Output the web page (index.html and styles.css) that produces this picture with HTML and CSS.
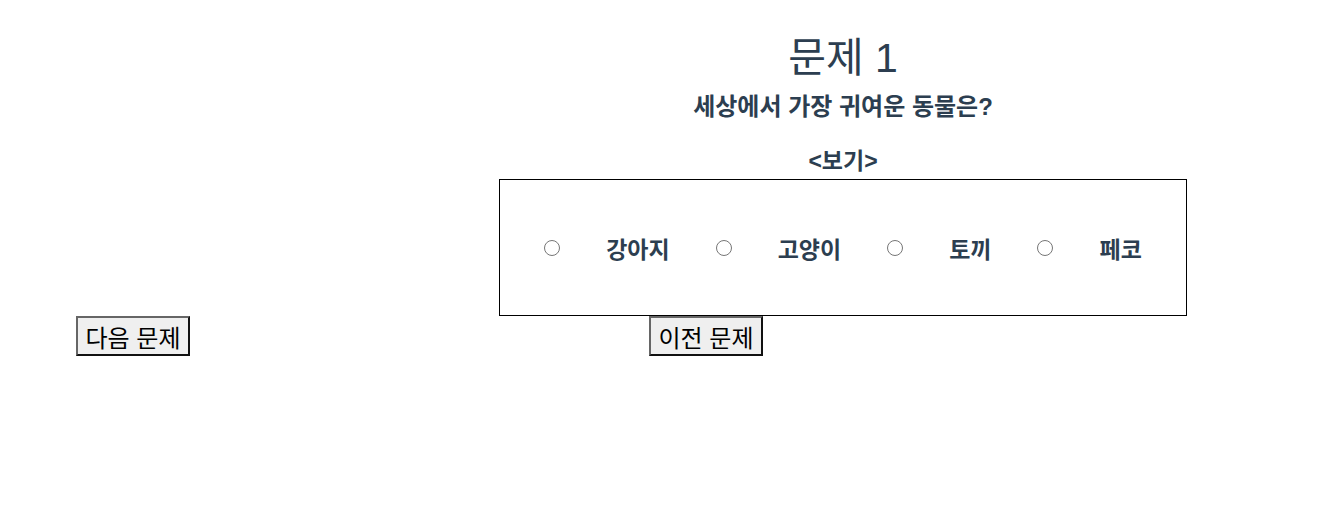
FILE: index.html
```html
<!DOCTYPE html>
<html lang="ko">
<head>
  <meta charset="UTF-8">
  <meta name="viewport" content="width=device-width, initial-scale=1.0">
  <title>퀴즈</title>
  <link rel="stylesheet" href="styles.css">
</head>
<body>
  <div id="app">
    <div class="quiz">
      <h1 class="quiz-title">문제 1</h1>
      <h3 class="quiz-question">세상에서 가장 귀여운 동물은?</h3>
      <h4 class="quiz-label">&lt;보기&gt;</h4>
      <div class="choices">
        <input type="radio" name="answer" id="a1" value="1">
        <label for="a1">강아지</label>
        <input type="radio" name="answer" id="a2" value="2">
        <label for="a2">고양이</label>
        <input type="radio" name="answer" id="a3" value="3">
        <label for="a3">토끼</label>
        <input type="radio" name="answer" id="a4" value="4">
        <label for="a4">페코</label>
      </div>
    </div>
    <div class="nav">
      <button class="nav-btn">다음 문제</button>
      <button class="nav-btn">이전 문제</button>
    </div>
  </div>
</body>
</html>
```

FILE: styles.css
```css
body {
  margin: 0;
  background: #fff;
  font-family: "Liberation Sans", "Noto Sans CJK KR", sans-serif;
  color: #2c3e50;
}

#app {
  padding-top: 33px;
}

.quiz {
  margin-left: 499px;
  width: 688px;
  text-align: center;
}

.quiz-title {
  font-size: 41px;
  font-weight: normal;
  margin: 0;
  line-height: 50px;
}

.quiz-question {
  font-size: 24px;
  font-weight: bold;
  margin: 9px 0 0;
  line-height: 30px;
}

.quiz-label {
  font-size: 23px;
  font-weight: bold;
  margin: 24px 0 3px;
  line-height: 30px;
}

.choices {
  border: 1px solid #000;
  height: 135px;
  display: flex;
  justify-content: center;
  align-items: center;
  gap: 46px;
}

.choices input {
  margin: 0;
  width: 16px;
  height: 16px;
}

.choices label {
  font-size: 23px;
  font-weight: bold;
}

.nav {
  display: flex;
  gap: 459px;
  padding-left: 76px;
}

.nav-btn {
  font-family: "Liberation Sans", "Noto Sans CJK KR", sans-serif;
  font-size: 24px;
  color: #000;
  background: #efefef;
  width: 114px;
  height: 40px;
  padding: 0;
  border: 2px solid;
  border-color: #666 #111 #111 #666;
}
```
